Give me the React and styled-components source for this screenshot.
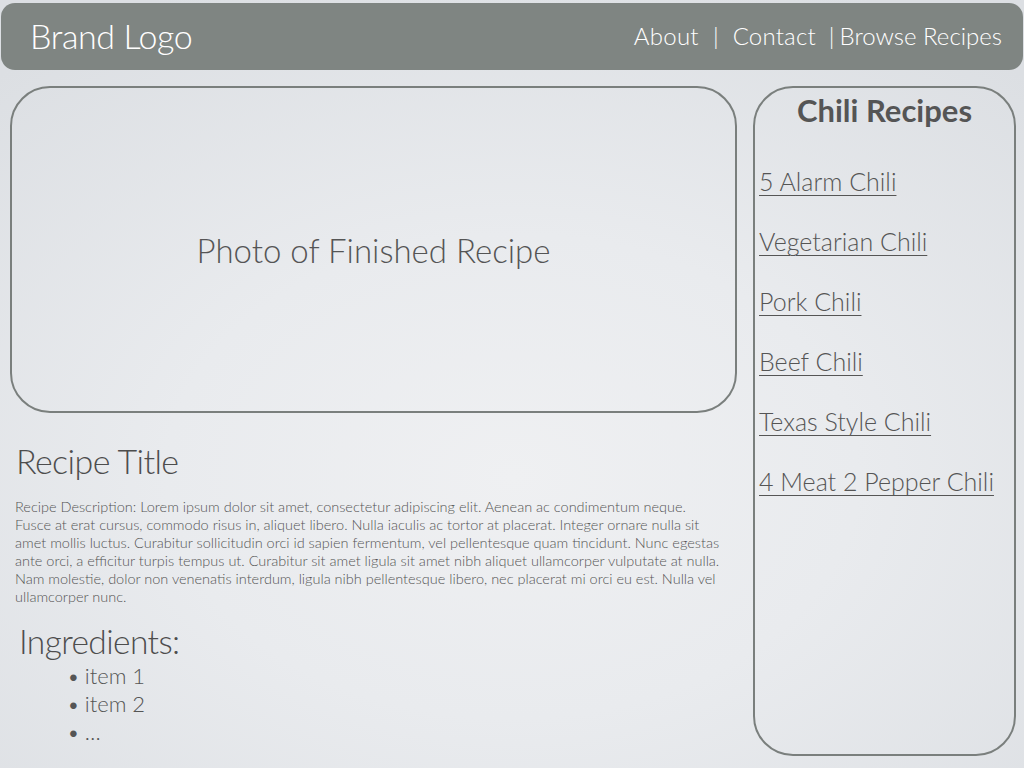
import React from "react";
import styled, { createGlobalStyle } from "styled-components";

const GlobalStyle = createGlobalStyle`
  html, body {
    margin: 0;
    padding: 0;
  }
  body {
    width: 1024px;
    height: 768px;
    overflow: hidden;
    font-family: "Lato", "Open Sans", sans-serif;
    font-weight: 300;
    background: radial-gradient(ellipse 75% 70% at 50% 62%, #eff0f2 0%, #e9ebee 45%, #dcdfe3 100%);
    color: #4d4d4d;
  }
`;

const Page = styled.div`
  width: 1024px;
  height: 768px;
  box-sizing: border-box;
  padding: 3px 1px 0 1px;
`;

const Header = styled.header`
  height: 67px;
  background: #7f8582;
  border-radius: 14px;
  display: flex;
  align-items: center;
  justify-content: space-between;
  padding: 0 21px 0 29px;
  color: #ffffff;
`;

const Brand = styled.div`
  font-size: 34px;
  letter-spacing: -0.4px;
  margin-top: -2px;
`;

const Nav = styled.nav`
  display: flex;
  align-items: center;
  font-size: 24px;
  margin-top: -2px;
`;

const NavItem = styled.span`
  letter-spacing: ${(p) => p.spacing || "0"};
`;

const NavSep = styled.span`
  margin: ${(p) => p.margin};
`;

const Main = styled.div`
  display: grid;
  grid-template-columns: 727px 263px;
  column-gap: 16px;
  padding: 16px 0 0 9px;
`;

const Left = styled.div`
  display: flex;
  flex-direction: column;
`;

const PhotoBox = styled.div`
  height: 323px;
  border: 2px solid #7a7f7d;
  border-radius: 40px;
  display: flex;
  align-items: center;
  justify-content: center;
  font-size: 33px;
  color: #555555;
`;

const RecipeTitle = styled.h1`
  margin: 28px 0 0 6px;
  font-size: 34px;
  font-weight: 300;
  letter-spacing: -0.6px;
  color: #4d4d4d;
  line-height: 40px;
`;

const Description = styled.p`
  margin: 17px 0 0 5px;
  font-size: 14.5px;
  line-height: 18px;
  color: #555555;
  white-space: nowrap;
`;

const IngredientsTitle = styled.h2`
  margin: 15px 0 0 9px;
  font-size: 33.5px;
  font-weight: 300;
  letter-spacing: -0.6px;
  line-height: 40px;
  color: #4d4d4d;
`;

const ItemList = styled.ul`
  margin: 1px 0 0 0;
  padding: 0 0 0 57px;
  list-style: none;
`;

const Item = styled.li`
  font-size: 22px;
  line-height: 28px;
  color: #555555;
  &::before {
    content: "•";
    margin-right: 5px;
  }
`;

const Sidebar = styled.aside`
  height: 666px;
  border: 2px solid #7a7f7d;
  border-radius: 40px;
  display: flex;
  flex-direction: column;
`;

const SideTitle = styled.h3`
  margin: 4px 0 0 0;
  text-align: center;
  font-size: 31px;
  font-weight: 700;
  color: #555555;
  line-height: 36px;
`;

const LinkList = styled.div`
  display: flex;
  flex-direction: column;
  gap: 30px;
  padding: 38px 0 0 4px;
`;

const RecipeLink = styled.a`
  font-size: 25px;
  line-height: 30px;
  color: #555555;
  text-decoration: underline;
  text-decoration-thickness: 1px;
  text-underline-offset: 4px;
  align-self: flex-start;
`;

const descLines = [
  "Recipe Description:  Lorem ipsum dolor sit amet, consectetur adipiscing elit. Aenean ac condimentum neque.",
  "Fusce at erat cursus, commodo risus in, aliquet libero. Nulla iaculis ac tortor at placerat. Integer ornare nulla sit",
  "amet mollis luctus. Curabitur sollicitudin orci id sapien fermentum, vel pellentesque quam tincidunt. Nunc egestas",
  "ante orci, a efficitur turpis tempus ut. Curabitur sit amet ligula sit amet nibh aliquet ullamcorper vulputate at nulla.",
  "Nam molestie, dolor non venenatis interdum, ligula nibh pellentesque libero, nec placerat mi orci eu est. Nulla vel",
  "ullamcorper nunc.",
];

const links = [
  "5 Alarm Chili",
  "Vegetarian Chili",
  "Pork Chili",
  "Beef Chili",
  "Texas Style Chili",
  "4 Meat 2 Pepper Chili",
];

const App = () => {
  return (
    <Page>
      <GlobalStyle />
      <Header>
        <Brand>Brand Logo</Brand>
        <Nav>
          <NavItem spacing="0.3px">About</NavItem>
          <NavSep margin="0 14px">|</NavSep>
          <NavItem spacing="0.2px">Contact</NavItem>
          <NavSep margin="0 5px 0 13px">|</NavSep>
          <NavItem>Browse Recipes</NavItem>
        </Nav>
      </Header>
      <Main>
        <Left>
          <PhotoBox>Photo of Finished Recipe</PhotoBox>
          <RecipeTitle>Recipe Title</RecipeTitle>
          <Description>
            {descLines.map((line, i) => (
              <React.Fragment key={i}>
                {line}
                {i < descLines.length - 1 && <br />}
              </React.Fragment>
            ))}
          </Description>
          <IngredientsTitle>Ingredients:</IngredientsTitle>
          <ItemList>
            <Item>item 1</Item>
            <Item>item 2</Item>
            <Item>…</Item>
          </ItemList>
        </Left>
        <Sidebar>
          <SideTitle>Chili Recipes</SideTitle>
          <LinkList>
            {links.map((l) => (
              <RecipeLink key={l} href="#">
                {l}
              </RecipeLink>
            ))}
          </LinkList>
        </Sidebar>
      </Main>
    </Page>
  );
};

export default App;
